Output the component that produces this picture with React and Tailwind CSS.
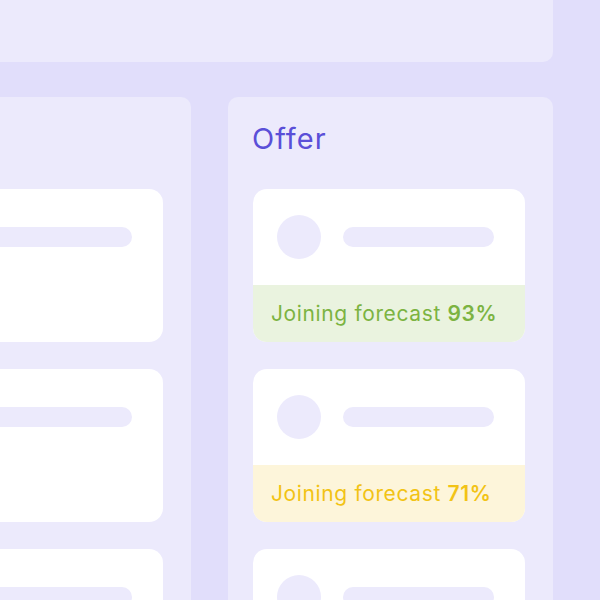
import React from 'react';

const leftCards = [{ id: 1 }, { id: 2 }, { id: 3 }];

const offerCards = [
  { id: 1, forecast: 93, tone: 'green' },
  { id: 2, forecast: 71, tone: 'yellow' },
  { id: 3, forecast: null },
];

const toneClasses = {
  green: 'bg-[#eaf3df] text-[#7cb342]',
  yellow: 'bg-[#fdf5da] text-[#f2c315]',
};

const CandidateCard = ({ forecast, tone }) => (
  <div className="w-[272px] rounded-[14px] bg-white overflow-hidden">
    <div className="h-[96px] flex items-center pl-[24px] gap-[22px]">
      <div className="w-[44px] h-[44px] rounded-full bg-[#eceafc]" />
      <div className="w-[151px] h-[20px] rounded-full bg-[#eceafc]" />
    </div>
    {forecast !== null && forecast !== undefined ? (
      <div className={`h-[57px] flex items-center pl-[18px] text-[21px] leading-[24px] tracking-[0.03em] ${toneClasses[tone]}`}>
        <span>
          Joining forecast <span className="font-semibold">{forecast}%</span>
        </span>
      </div>
    ) : (
      <div className="h-[57px]" />
    )}
  </div>
);

const Column = ({ title, cards }) => (
  <div className="w-[325px] h-[520px] rounded-[10px] bg-[#eceafc] pl-[25px] pt-[24px]">
    {/* title area keeps its height even when the column has no title in view */}
    <h2 className="h-[36px] text-[29px] leading-[36px] tracking-[0.035em] text-[#5a4fd8] -ml-[1px] mb-[32px]">{title}</h2>
    <div className="flex flex-col gap-[27px]">
      {cards.map((card) => (
        <CandidateCard key={card.id} forecast={card.forecast} tone={card.tone} />
      ))}
    </div>
  </div>
);

export default function App() {
  return (
    <div className="w-[600px] h-[600px] overflow-hidden bg-[#e1defb] font-['Inter',sans-serif]">
      <div className="-ml-[134px] w-[687px]">
        {/* Board header */}
        <div className="h-[62px] rounded-b-[10px] bg-[#eceafc]" />

        {/* Pipeline columns */}
        <div className="mt-[35px] flex gap-[37px]">
          <Column cards={leftCards} />
          <Column title="Offer" cards={offerCards} />
        </div>
      </div>
    </div>
  );
}
